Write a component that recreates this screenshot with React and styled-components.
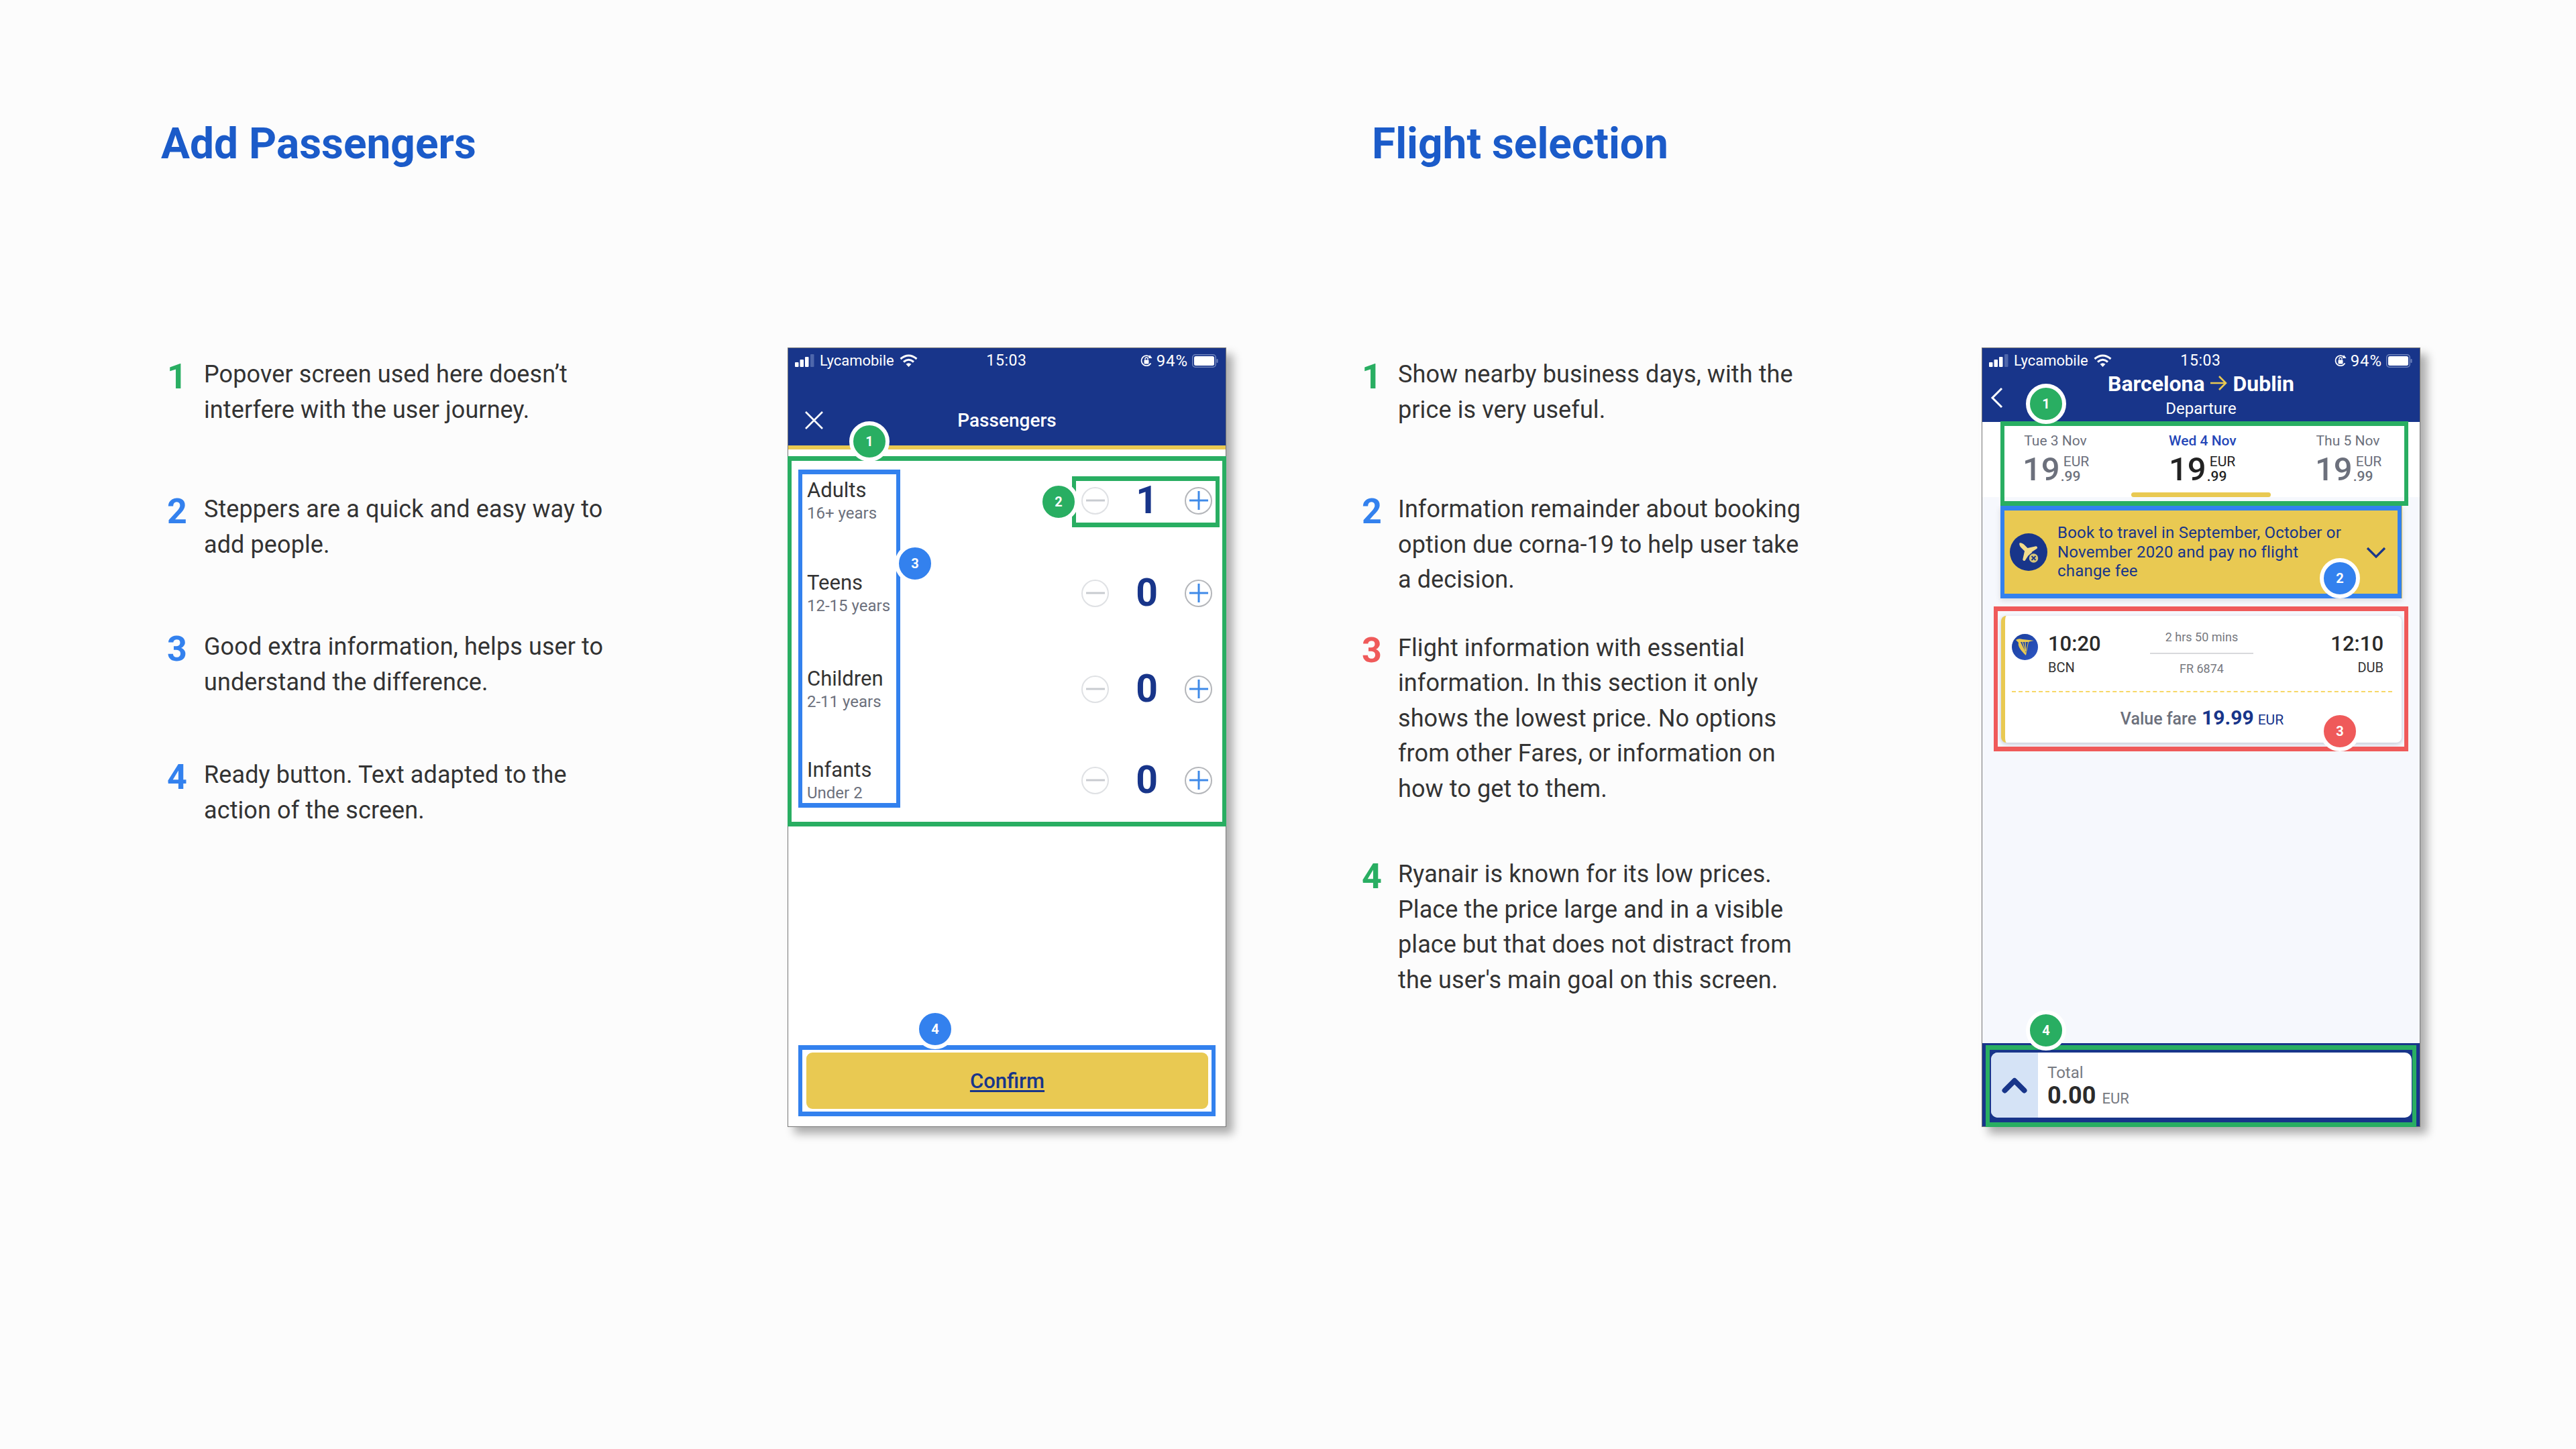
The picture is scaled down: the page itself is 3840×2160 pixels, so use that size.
import React from "react";
import styled, { createGlobalStyle } from "styled-components";

const NAVY = "#18358a";
const GREEN = "#29ae62";
const BLUE = "#3381ee";
const RED = "#ef5a5a";
const GOLD = "#e9c952";

const Global = createGlobalStyle`
  html, body { margin: 0; padding: 0; background: #fcfcfc; }
  body { font-family: Roboto, "Liberation Sans", sans-serif; }
  * { box-sizing: border-box; }
`;

const Page = styled.div`
  width: 3840px;
  height: 2160px;
  background: #fcfcfc;
  display: flex;
  padding-left: 240px;
  overflow: hidden;
`;
const Section = styled.section`
  flex: 0 0 ${(p) => p.$width}px;
  padding-top: 172px;
`;
const Title = styled.h1`
  margin: 0;
  height: 84px;
  font: 700 64px/86px Roboto, sans-serif;
  color: #1b5bc9;
`;
const Content = styled.div`
  margin-top: 262px;
  margin-left: ${(p) => p.$offset}px;
  display: flex;
`;
const List = styled.ol`
  flex: 0 0 ${(p) => p.$width}px;
  list-style: none;
  margin: 0;
  padding: 14px 0 0;
`;
const Item = styled.li`
  display: flex;
  margin-top: ${(p) => p.$gap}px;
`;
const Num = styled.span`
  flex: 0 0 ${(p) => p.$col}px;
  font: 700 52px/52px Roboto, sans-serif;
  padding-top: 4px;
  color: ${(p) => p.$color};
`;
const Copy = styled.p`
  margin: 0;
  font: 400 36px/52.5px Roboto, sans-serif;
  letter-spacing: 0.1px;
  color: #333;
  white-space: nowrap;
`;

const Phone = styled.div`
  position: relative;
  flex: none;
  width: 654px;
  height: 1162px;
  background: ${(p) => p.$bg};
  border: 1px solid #777;
  box-shadow: 10px 10px 13px rgba(0, 0, 0, 0.32);
  display: flex;
  flex-direction: column;
`;
const Header = styled.header`
  background: ${NAVY};
  color: #fff;
  height: ${(p) => p.$height}px;
  flex: none;
  display: flex;
  flex-direction: column;
`;
const Status = styled.div`
  height: 36px;
  flex: none;
  display: grid;
  grid-template-columns: 1fr auto 1fr;
  align-items: center;
  padding: 0 11px 0 10px;
  font: 400 22px/36px Roboto, sans-serif;
  color: #fff;
`;
const StatusSide = styled.div`
  display: flex;
  align-items: center;
  justify-content: ${(p) => (p.$right ? "flex-end" : "flex-start")};
  gap: ${(p) => p.$gap}px;
`;
const Time = styled.span`
  font-weight: 400;
  font-size: 23px;
  letter-spacing: 0.6px;
  padding-top: 1px;
`;
const Battery = styled.span`
  font-size: 24px;
  letter-spacing: 0.9px;
`;
const TitleBar = styled.div`
  position: relative;
  flex: 1;
  display: flex;
  align-items: center;
  justify-content: center;
  font: 500 28px/34px Roboto, sans-serif;
  padding-top: ${(p) => p.$pad}px;
`;
const CloseIcon = styled.svg`
  position: absolute;
  left: 25px;
  top: 58px;
  width: 27px;
  height: 27px;
`;
const GoldRule = styled.div`
  height: 6px;
  flex: none;
  background: ${GOLD};
`;
const Rows = styled.div`
  padding: 40px 0 0 28px;
  display: flex;
  flex-direction: column;
`;
const Row = styled.div`
  height: 72px;
  display: flex;
  align-items: center;
  justify-content: space-between;
  margin-top: ${(p) => p.$gap}px;
  padding-right: 20px;
`;
const Labels = styled.div`
  display: flex;
  flex-direction: column;
`;
const LabelName = styled.span`
  font: 400 31px/37px Roboto, sans-serif;
  color: #333;
`;
const LabelSub = styled.span`
  font: 400 24px/32px Roboto, sans-serif;
  color: #6c707c;
`;
const Stepper = styled.div`
  display: grid;
  grid-template-columns: 41px 113px 41px;
  align-items: center;
  justify-items: center;
`;
const Round = styled.div`
  width: 41px;
  height: 41px;
  border-radius: 50%;
  border: 2px solid ${(p) => (p.$on ? "#b4b6ba" : "#dfe1e4")};
  display: flex;
  align-items: center;
  justify-content: center;
  color: ${(p) => (p.$on ? "#3f8ae8" : "#c8cbd0")};
`;
const Count = styled.span`
  font: 700 57px/60px Roboto, sans-serif;
  color: ${NAVY};
`;
const Spacer = styled.div`
  flex: 1;
`;
const ConfirmWrap = styled.div`
  padding: 0 26px 26px 27px;
  flex: none;
`;
const Confirm = styled.button`
  display: block;
  width: 100%;
  height: 84px;
  border: 0;
  border-radius: 9px;
  background: ${GOLD};
  color: ${NAVY};
  font: 500 31px/84px Roboto, sans-serif;
  text-decoration: underline;
  text-underline-offset: 3px;
`;

const Frame = styled.div`
  position: absolute;
  left: ${(p) => p.$x}px;
  top: ${(p) => p.$y}px;
  width: ${(p) => p.$w}px;
  height: ${(p) => p.$h}px;
  border-style: solid;
  border-width: 7px 6px;
  border-color: ${(p) => p.$color};
  pointer-events: none;
`;
const Badge = styled.div`
  position: absolute;
  left: ${(p) => p.$x - 30}px;
  top: ${(p) => p.$y - 30}px;
  width: 60px;
  height: 60px;
  border-radius: 50%;
  border: 6px solid #fff;
  background: ${(p) => p.$color};
  color: #fff;
  font: 700 20px/48px Roboto, sans-serif;
  text-align: center;
`;

const RouteTitle = styled.div`
  display: flex;
  flex-direction: column;
  align-items: center;
  font: 700 32px/38px Roboto, sans-serif;
  margin-top: -7px;
`;
const RouteSub = styled.span`
  font: 400 24px/30px Roboto, sans-serif;
  margin-top: 3px;
`;
const BackIcon = styled.svg`
  position: absolute;
  left: 12px;
  top: 22px;
  width: 20px;
  height: 32px;
`;
const Dates = styled.div`
  height: 112px;
  flex: none;
  background: #fff;
  position: relative;
  display: flex;
  justify-content: space-between;
  padding: 15px 58px 0 60px;
`;
const DateCol = styled.div`
  width: 98px;
  color: ${(p) => (p.$active ? "#222" : "#6c707c")};
`;
const DateText = styled.div`
  font: ${(p) => (p.$active ? 500 : 400)} 21px/26px Roboto, sans-serif;
  color: ${(p) => (p.$active ? "#2447b8" : "#6c707c")};
  white-space: nowrap;
  text-align: center;
`;
const Price = styled.div`
  display: flex;
  margin-top: 5px;
  height: 50px;
`;
const PriceBig = styled.span`
  font: 500 49px/50px Roboto, sans-serif;
`;
const PriceSide = styled.span`
  display: flex;
  flex-direction: column;
  margin-left: 1px;
  font: 400 21px/21px Roboto, sans-serif;
`;
const PriceEur = styled.span`
  margin-left: 4px;
  padding-top: 3px;
`;
const PriceCents = styled.span`
  font-weight: 500;
  padding-top: 1px;
`;
const ActiveBar = styled.div`
  position: absolute;
  left: 222px;
  bottom: 0;
  width: 208px;
  height: 7px;
  border-radius: 4px;
  background: ${GOLD};
`;
const Banner = styled.div`
  margin: 13px 26px 0 27px;
  height: 138px;
  flex: none;
  background: ${GOLD};
  display: flex;
  align-items: center;
  padding: 0 24px 0 14px;
  color: ${NAVY};
  box-shadow: 0 3px 8px rgba(0, 0, 0, 0.12);
`;
const PlaneDisc = styled.div`
  width: 56px;
  height: 56px;
  border-radius: 50%;
  background: ${NAVY};
  flex: none;
  display: flex;
  align-items: center;
  justify-content: center;
`;
const BannerText = styled.p`
  flex: 1;
  margin: 0 0 0 15px;
  font: 400 24px/28.5px Roboto, sans-serif;
  letter-spacing: 0.2px;
  white-space: nowrap;
`;
const FlightCard = styled.article`
  margin: 26px 27px 0 28px;
  height: 189px;
  flex: none;
  background: #fff;
  border-left: 6px solid ${GOLD};
  border-radius: 8px;
  box-shadow: 0 2px 6px rgba(40, 50, 90, 0.25);
  padding: 0 0 0 10px;
  display: flex;
  flex-direction: column;
`;
const Legs = styled.div`
  height: 105px;
  flex: none;
  display: flex;
  align-items: flex-start;
  padding-right: 27px;
`;
const Logo = styled.svg`
  width: 39px;
  height: 39px;
  margin-top: 27px;
  flex: none;
`;
const Leg = styled.div`
  flex: ${(p) => (p.$grow ? "1" : `0 0 ${p.$w}px`)};
  margin-left: ${(p) => p.$ml}px;
  padding-top: 24px;
  text-align: ${(p) => p.$align};
`;
const LegTime = styled.div`
  font: 500 31px/36px Roboto, sans-serif;
  color: #2b2b2b;
`;
const LegCode = styled.div`
  font: 400 20px/26px Roboto, sans-serif;
  color: #333;
  margin-top: 4px;
`;
const Mid = styled.div`
  flex: 0 0 278px;
  display: flex;
  flex-direction: column;
  align-items: center;
  padding-top: 20px;
  color: #77797f;
  font: 400 18px/24px Roboto, sans-serif;
`;
const MidLine = styled.div`
  width: 154px;
  height: 2px;
  background: #d8d9dc;
  margin: 11px 0 10px;
`;
const Dash = styled.div`
  height: 0;
  flex: none;
  margin: 7px 14px 0 0;
  border-top: 2px dashed #f7d867;
`;
const Fare = styled.div`
  flex: 1;
  display: flex;
  align-items: baseline;
  justify-content: center;
  padding-top: 20px;
  padding-right: 14px;
  gap: 8px;
  color: #6c707c;
  font: 500 25px/36px Roboto, sans-serif;
`;
const FareNum = styled.span`
  font: 700 30px/36px Roboto, sans-serif;
  color: ${NAVY};
`;
const FareCur = styled.span`
  font: 400 21px/36px Roboto, sans-serif;
  color: ${NAVY};
  margin-left: -2px;
`;
const Footer = styled.footer`
  flex: none;
  height: 124px;
  background: ${NAVY};
  padding: 14px 12px 13px 13px;
  margin-top: auto;
`;
const TotalCard = styled.div`
  height: 97px;
  background: #fff;
  border-radius: 10px;
  overflow: hidden;
  display: flex;
`;
const Toggle = styled.div`
  width: 70px;
  flex: none;
  background: #d5e3f6;
  display: flex;
  align-items: center;
  justify-content: center;
`;
const TotalText = styled.div`
  padding: 16px 0 0 14px;
`;
const TotalLabel = styled.div`
  font: 400 24px/28px Roboto, sans-serif;
  color: #777a82;
`;
const TotalValue = styled.div`
  display: flex;
  align-items: baseline;
  gap: 9px;
  margin-top: 1px;
  font: 700 36px/38px Roboto, sans-serif;
  color: #2b2b2b;
`;
const TotalCur = styled.span`
  font: 400 22px/38px Roboto, sans-serif;
  color: #777a82;
`;

function StatusBar() {
  return (
    <Status>
      <StatusSide $gap={8}>
        <svg width="29" height="19" viewBox="0 0 29 19">
          <rect x="0" y="12" width="5.5" height="7" rx="1" fill="#fff" />
          <rect x="7.5" y="8" width="5.5" height="11" rx="1" fill="#fff" />
          <rect x="15" y="4" width="5.5" height="15" rx="1" fill="#fff" />
          <rect x="23" y="0" width="5.5" height="19" rx="1" fill="#4e67ab" />
        </svg>
        <span>Lycamobile</span>
        <svg width="27" height="20" viewBox="0 0 27 20" fill="none" stroke="#fff" strokeWidth="3">
          <path d="M1.5 7 Q13.5 -3 25.5 7" />
          <path d="M6 11.5 Q13.5 5 21 11.5" />
          <path d="M13.5 19 L9.5 14.8 Q13.5 11.6 17.5 14.8 Z" fill="#fff" strokeWidth="0" />
        </svg>
      </StatusSide>
      <Time>15:03</Time>
      <StatusSide $right $gap={6}>
        <svg width="18" height="20" viewBox="0 0 18 20" fill="none">
          <path d="M15.5 13.5 A7.5 7.5 0 1 1 14.5 4.5" stroke="#fff" strokeWidth="1.8" />
          <path d="M14 1 L17.5 6 L12 6 Z" fill="#fff" />
          <rect x="5.5" y="8.5" width="7" height="6" rx="1" fill="#fff" />
          <path d="M7 8.5 V7 a2 2 0 0 1 4 0 v1.5" stroke="#fff" strokeWidth="1.3" />
        </svg>
        <Battery>94%</Battery>
        <svg width="39" height="20" viewBox="0 0 39 20">
          <rect x="0.75" y="0.75" width="34.5" height="18.5" rx="4" fill="none" stroke="#7085bd" strokeWidth="1.5" />
          <rect x="3" y="3" width="30" height="14" rx="2.5" fill="#fff" />
          <rect x="36.5" y="7" width="2" height="6" rx="1" fill="#7085bd" />
        </svg>
      </StatusSide>
    </Status>
  );
}

function StepButton({ on }) {
  return (
    <Round $on={on}>
      <svg width="28" height="28" viewBox="0 0 28 28" stroke="currentColor" strokeWidth="3">
        <path d="M0 14 H28" />
        {on && <path d="M14 0 V28" />}
      </svg>
    </Round>
  );
}

const rows = [
  { name: "Adults", sub: "16+ years", n: 1, gap: 0 },
  { name: "Teens", sub: "12-15 years", n: 0, gap: 66 },
  { name: "Children", sub: "2-11 years", n: 0, gap: 71 },
  { name: "Infants", sub: "Under 2", n: 0, gap: 64 },
];

const passengerNotes = [
  { c: GREEN, gap: 0, t: ["Popover screen used here doesn’t", "interfere with the user journey."] },
  { c: BLUE, gap: 96, t: ["Steppers are a quick and easy way to", "add people."] },
  { c: BLUE, gap: 100, t: ["Good extra information, helps user to", "understand the difference."] },
  { c: BLUE, gap: 86, t: ["Ready button. Text adapted to the", "action of the screen."] },
];
const flightNotes = [
  { c: GREEN, gap: 0, t: ["Show nearby business days, with the", "price is very useful."] },
  { c: BLUE, gap: 96, t: ["Information remainder about booking", "option due corna-19 to help user take", "a decision."] },
  { c: RED, gap: 49, t: ["Flight information with essential", "information. In this section it only", "shows the lowest price. No options", "from other Fares, or information on", "how to get to them."] },
  { c: GREEN, gap: 75, t: ["Ryanair is known for its low prices.", "Place the price large and in a visible", "place but that does not distract from", "the user's main goal on this screen."] },
];

function Notes({ items, width, col }) {
  return (
    <List $width={width}>
      {items.map((it, i) => (
        <Item key={i} $gap={it.gap}>
          <Num $color={it.c} $col={col}>{i + 1}</Num>
          <Copy>
            {it.t.map((l, j) => (
              <React.Fragment key={j}>
                {j > 0 && <br />}
                {l}
              </React.Fragment>
            ))}
          </Copy>
        </Item>
      ))}
    </List>
  );
}

function PassengersPhone() {
  return (
    <Phone $bg="#fff">
      <Header $height={145}>
        <StatusBar />
        <TitleBar $pad={34}>
          <CloseIcon viewBox="0 0 27 27" stroke="#fff" strokeWidth="2.6" fill="none">
            <path d="M1 1 L26 26 M26 1 L1 26" />
          </CloseIcon>
          Passengers
        </TitleBar>
      </Header>
      <GoldRule />
      <Rows>
        {rows.map((r) => (
          <Row key={r.name} $gap={r.gap}>
            <Labels>
              <LabelName>{r.name}</LabelName>
              <LabelSub>{r.sub}</LabelSub>
            </Labels>
            <Stepper>
              <StepButton />
              <Count>{r.n}</Count>
              <StepButton on />
            </Stepper>
          </Row>
        ))}
      </Rows>
      <Spacer />
      <ConfirmWrap>
        <Confirm>Confirm</Confirm>
      </ConfirmWrap>
      <Frame $x={-1} $y={161} $w={654} $h={552} $color={GREEN} />
      <Frame $x={15} $y={181} $w={152} $h={504} $color={BLUE} />
      <Frame $x={423} $y={191} $w={220} $h={76} $color={GREEN} />
      <Frame $x={15} $y={1039} $w={622} $h={106} $color={BLUE} />
      <Badge $x={121} $y={139} $color={GREEN}>1</Badge>
      <Badge $x={403} $y={229} $color={GREEN}>2</Badge>
      <Badge $x={189} $y={321} $color={BLUE}>3</Badge>
      <Badge $x={219} $y={1015} $color={BLUE}>4</Badge>
    </Phone>
  );
}

function DatePrice({ label, active }) {
  return (
    <DateCol $active={active}>
      <DateText $active={active}>{label}</DateText>
      <Price>
        <PriceBig>19</PriceBig>
        <PriceSide>
          <PriceEur>EUR</PriceEur>
          <PriceCents>.99</PriceCents>
        </PriceSide>
      </Price>
    </DateCol>
  );
}

function FlightPhone() {
  return (
    <Phone $bg="#f6f8fd">
      <Header $height={110}>
        <StatusBar />
        <TitleBar $pad={0}>
          <BackIcon viewBox="0 0 20 32" fill="none" stroke="#fff" strokeWidth="3">
            <path d="M17 2 L3 16 L17 30" />
          </BackIcon>
          <RouteTitle>
            <span>
              Barcelona{" "}
              <svg width="26" height="24" viewBox="0 0 26 24" fill="none" stroke={GOLD} strokeWidth="2.6">
                <path d="M1 12 H24 M14 2 L24 12 L14 22" />
              </svg>{" "}
              Dublin
            </span>
            <RouteSub>Departure</RouteSub>
          </RouteTitle>
        </TitleBar>
      </Header>
      <Dates>
        <DatePrice label="Tue 3 Nov" />
        <DatePrice label="Wed 4 Nov" active />
        <DatePrice label="Thu 5 Nov" />
        <ActiveBar />
      </Dates>
      <Banner>
        <PlaneDisc>
          <svg width="36" height="36" viewBox="0 0 24 24">
            <path
              transform="translate(24 0) scale(-1 1)"
              d="M17.8 19.2 16 11l3.5-3.5C21 6 21.5 4 21 3c-1-.5-3 0-4.5 1.5L13 8 4.8 6.2c-.5-.1-.9.1-1.1.5l-.3.5c-.2.5-.1 1 .3 1.3L9 12l-2 3H4l-1 1 3 2 2 3 1-1v-3l3-2 3.5 5.3c.3.4.8.5 1.3.3l.5-.2c.4-.3.6-.7.5-1.2z"
              fill="#f2dc8c"
            />
            <circle cx="17" cy="18" r="5" fill="#d8c678" stroke={NAVY} strokeWidth="1" />
            <path d="M15 16 L19 20 M19 16 L15 20" stroke={NAVY} strokeWidth="1.2" />
          </svg>
        </PlaneDisc>
        <BannerText>
          Book to travel in September, October or<br />
          November 2020 and pay no flight<br />
          change fee
        </BannerText>
        <svg width="30" height="17" viewBox="0 0 30 17" fill="none" stroke={NAVY} strokeWidth="3.2">
          <path d="M2 2 L15 15 L28 2" />
        </svg>
      </Banner>
      <FlightCard>
        <Legs>
          <Logo viewBox="0 0 39 39">
            <defs>
              <linearGradient id="harpBlue" x1="0" y1="0" x2="1" y2="1">
                <stop offset="0" stopColor="#1a3d9c" />
                <stop offset="1" stopColor="#2d57c4" />
              </linearGradient>
            </defs>
            <circle cx="19.5" cy="19.5" r="19.5" fill="url(#harpBlue)" />
            <path d="M6 9 Q10 6 16 8 Q26 9 33 10 Q27 11 25 12 L21 32 Q8 20 10 13 Z" fill="#e9c952" />
            <path d="M13 12 L21 28 L24 12 Z" fill="#1f45a8" />
            <path d="M16 12 L20.5 26 M20 12 L21 26" stroke="#e9c952" strokeWidth="1.2" />
          </Logo>
          <Leg $w={90} $ml={15} $align="left">
            <LegTime>10:20</LegTime>
            <LegCode>BCN</LegCode>
          </Leg>
          <Mid>
            2 hrs 50 mins
            <MidLine />
            FR 6874
          </Mid>
          <Leg $grow $ml={0} $align="right">
            <LegTime>12:10</LegTime>
            <LegCode>DUB</LegCode>
          </Leg>
        </Legs>
        <Dash />
        <Fare>
          Value fare <FareNum>19.99</FareNum> <FareCur>EUR</FareCur>
        </Fare>
      </FlightCard>
      <Footer>
        <TotalCard>
          <Toggle>
            <svg width="38" height="24" viewBox="0 0 38 24" fill="none" stroke={NAVY} strokeWidth="8" strokeLinecap="round" strokeLinejoin="round">
              <path d="M4.5 19.5 L19 5 L33.5 19.5" />
            </svg>
          </Toggle>
          <TotalText>
            <TotalLabel>Total</TotalLabel>
            <TotalValue>
              0.00 <TotalCur>EUR</TotalCur>
            </TotalValue>
          </TotalText>
        </TotalCard>
      </Footer>
      <Frame $x={27} $y={109} $w={608} $h={126} $color={GREEN} />
      <Frame $x={27} $y={235} $w={598} $h={138} $color={BLUE} />
      <Frame $x={17} $y={385} $w={618} $h={216} $color={RED} />
      <Frame $x={5} $y={1039} $w={642} $h={122} $color={GREEN} />
      <Badge $x={95} $y={83} $color={GREEN}>1</Badge>
      <Badge $x={533} $y={343} $color={BLUE}>2</Badge>
      <Badge $x={533} $y={571} $color={RED}>3</Badge>
      <Badge $x={95} $y={1017} $color={GREEN}>4</Badge>
    </Phone>
  );
}

export default function App() {
  return (
    <Page>
      <Global />
      <Section $width={1805}>
        <Title>Add Passengers</Title>
        <Content $offset={9}>
          <Notes items={passengerNotes} width={925} col={55} />
          <PassengersPhone />
        </Content>
      </Section>
      <Section $width={1795}>
        <Title>Flight selection</Title>
        <Content $offset={-15}>
          <Notes items={flightNotes} width={924} col={54} />
          <FlightPhone />
        </Content>
      </Section>
    </Page>
  );
}
